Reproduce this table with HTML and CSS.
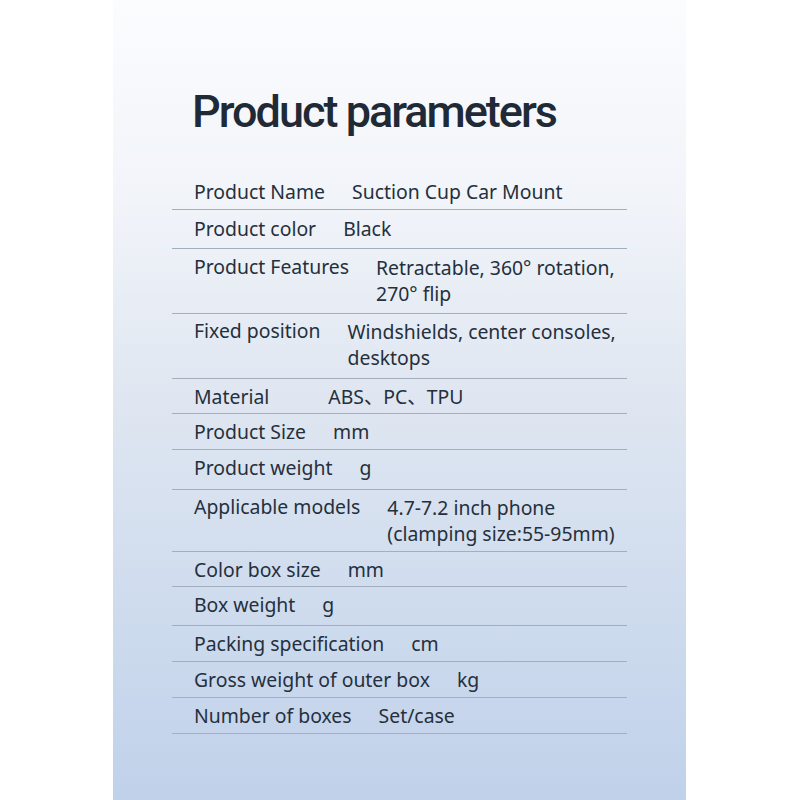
FILE: index.html
```html
<!DOCTYPE html>
<html lang="en">
<head>
<meta charset="utf-8">
<title>Product parameters</title>
<link rel="stylesheet" href="styles.css">
</head>
<body>
<main class="panel">
  <h1 class="title">Product parameters</h1>
  <div class="table">
    <div class="row"><span class="label">Product Name</span><span class="value">Suction Cup Car Mount</span></div>
    <div class="row pt7 pb7"><span class="label">Product color</span><span class="value">Black</span></div>
    <div class="row pt6 pb6"><span class="label">Product Features</span><span class="value multi">Retractable, 360° rotation,<br>270° flip</span></div>
    <div class="row pt5 pb7"><span class="label">Fixed position</span><span class="value multi">Windshields, center consoles,<br>desktops</span></div>
    <div class="row pb4"><span class="label label-wide">Material</span><span class="value">ABS、PC、TPU</span></div>
    <div class="row"><span class="label">Product Size</span><span class="value">mm</span></div>
    <div class="row pb9"><span class="label">Product weight</span><span class="value">g</span></div>
    <div class="row pt5 pb4"><span class="label">Applicable models</span><span class="value multi">4.7-7.2 inch phone<br>(clamping size:55-95mm)</span></div>
    <div class="row pb4"><span class="label">Color box size</span><span class="value">mm</span></div>
    <div class="row pb8"><span class="label">Box weight</span><span class="value">g</span></div>
    <div class="row"><span class="label">Packing specification</span><span class="value">cm</span></div>
    <div class="row"><span class="label">Gross weight of outer box</span><span class="value">kg</span></div>
    <div class="row"><span class="label">Number of boxes</span><span class="value">Set/case</span></div>
  </div>
</main>
</body>
</html>
```

FILE: styles.css
```css
html, body {
  margin: 0;
  padding: 0;
  background: #ffffff;
}

body {
  width: 800px;
  height: 800px;
  overflow: hidden;
  font-family: "Noto Sans", "Noto Sans CJK SC", sans-serif;
  color: #25303c;
}

.panel {
  box-sizing: border-box;
  margin-left: 113px;
  width: 573px;
  height: 800px;
  padding-top: 85px;
  background: linear-gradient(180deg, #fbfcfe 0%, #f1f4f9 25%, #dfe6f1 50%, #cfdcee 75%, #c0d1ea 100%);
}

.title {
  margin: 0 0 0 79px;
  font-family: Roboto, "Noto Sans", sans-serif;
  font-size: 45px;
  line-height: 54px;
  font-weight: 500;
  color: #1f2a36;
  letter-spacing: -2px;
}

.table {
  margin: 35px 0 0 59px;
  width: 455px;
}

.row {
  display: flex;
  gap: 27px;
  padding: 6px 0 5px 22px;
  border-bottom: 1px solid #a4afbd;
  font-size: 19.4px;
  line-height: 24px;
}

.pt5 { padding-top: 5px; }
.pt6 { padding-top: 6px; }
.pt7 { padding-top: 7px; }
.pb4 { padding-bottom: 4px; }
.pb6 { padding-bottom: 6px; }
.pb7 { padding-bottom: 7px; }
.pb8 { padding-bottom: 8px; }
.pb9 { padding-bottom: 9px; }

.label {
  white-space: nowrap;
}

.label-wide {
  margin-right: 32px;
}

.value {
  white-space: nowrap;
}

.value.multi {
  line-height: 26px;
}
```
